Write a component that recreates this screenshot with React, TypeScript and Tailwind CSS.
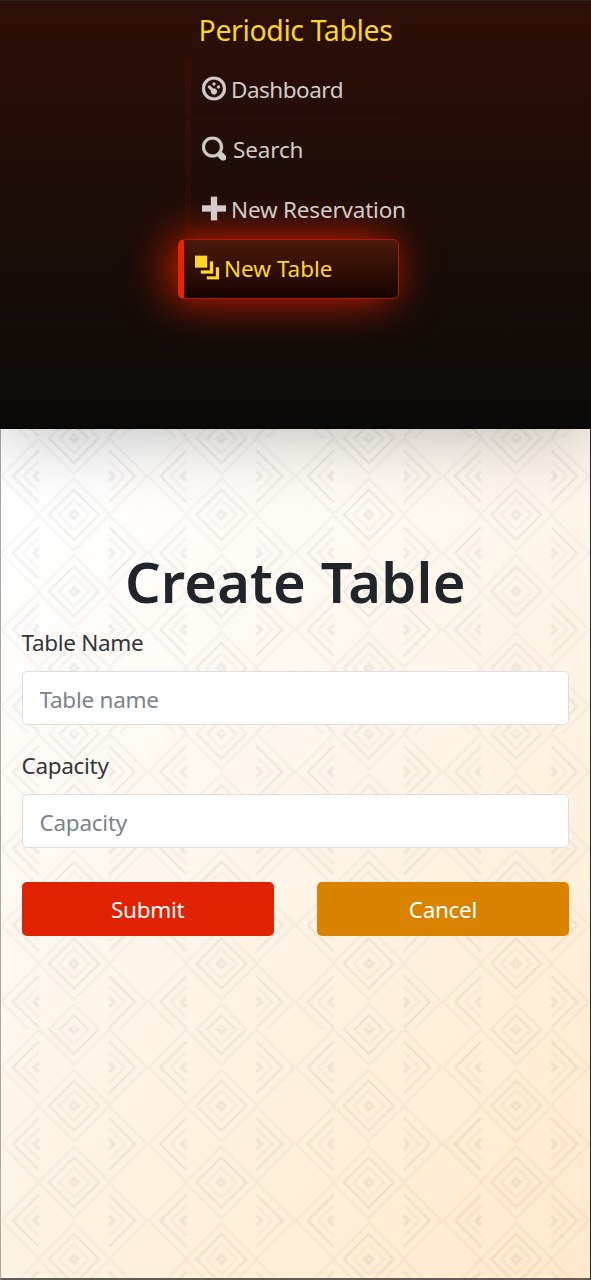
import React from "react";

const ICONS = {
  dashboard:
    "M4 0c-2.2 0-4 1.8-4 4s1.8 4 4 4 4-1.8 4-4-1.8-4-4-4zm0 1c1.66 0 3 1.34 3 3s-1.34 3-3 3-3-1.34-3-3 1.34-3 3-3zm0 1c-.28 0-.5.22-.5.5s.22.5.5.5.5-.22.5-.5-.22-.5-.5-.5zm-1.66 1a.5.5 0 0 0-.19.84l.91.91c-.02.08-.06.16-.06.25 0 .55.45 1 1 1s1-.45 1-1-.45-1-1-1c-.09 0-.17.04-.25.06l-.91-.91a.5.5 0 0 0-.44-.16.5.5 0 0 0-.06 0zm3.16 0c-.28 0-.5.22-.5.5s.22.5.5.5.5-.22.5-.5-.22-.5-.5-.5z",
  search:
    "M3.5 0c-1.93 0-3.5 1.57-3.5 3.5s1.57 3.5 3.5 3.5c.59 0 1.17-.14 1.66-.41a1 1 0 0 0 .13.13l1 1a1.02 1.02 0 1 0 1.44-1.44l-1-1a1 1 0 0 0-.16-.13c.27-.49.44-1.06.44-1.66 0-1.93-1.55-3.5-3.5-3.5zm0 1c1.39 0 2.5 1.11 2.5 2.5 0 .66-.24 1.27-.66 1.72-.01.01-.02.02-.03.03a1 1 0 0 0-.13.13c-.44.4-1.04.63-1.69.63-1.39 0-2.5-1.11-2.5-2.5s1.11-2.5 2.5-2.5z",
  plus: "M3 0v3h-3v2h3v3h2v-3h3v-2h-3v-3h-2z",
  layers: "M0 0v4h4v-4h-4zm5 2v3h-3v1h4v-4h-1zm2 2v3h-3v1h4v-4h-1z",
};

function Icon({ d }: { d: string }) {
  return (
    <svg viewBox="0 0 8 8" className="h-6 w-6 shrink-0 -translate-y-[1.5px] fill-current stroke-current stroke-[0.12]">
      <path d={d} />
    </svg>
  );
}

const ROWS = [0, 76.7, 153.4, 230.1, 306.8];

function diamond(cx: number, cy: number, r: number) {
  return `M${cx - r} ${cy}L${cx} ${cy - r}L${cx + r} ${cy}L${cx} ${cy + r}Z`;
}
function leftChevron(cy: number, r: number) {
  return `M38.5 ${cy - r}L${38.5 - r} ${cy}L38.5 ${cy + r}`;
}
function rightChevron(cy: number, r: number) {
  return `M108.5 ${cy - r}L${108.5 + r} ${cy}L108.5 ${cy + r}`;
}

function motif(rDiamond: number, rChevron: number) {
  return ROWS.map(
    (y) => diamond(73.5, y, rDiamond) + leftChevron(y + 38.3, rChevron) + rightChevron(y + 38.3, rChevron)
  ).join("");
}

function Backdrop() {
  return (
    <svg className="absolute inset-0 h-full w-full" aria-hidden="true">
      <defs>
        <pattern id="weave" x="-0.5" y="9" width="147.4" height="295.5" patternUnits="userSpaceOnUse">
          <g fill="none" stroke="#3c3028">
            <path d={motif(36, 38)} strokeOpacity="0.042" strokeWidth="2.8" />
            <path d={motif(25, 26)} strokeOpacity="0.075" strokeWidth="2.6" />
            <path d={motif(15, 15.5)} strokeOpacity="0.042" strokeWidth="2.8" />
            <path d={motif(4, 5)} strokeOpacity="0.07" strokeWidth="3.4" />
          </g>
        </pattern>
      </defs>
      <rect width="100%" height="100%" fill="url(#weave)" />
    </svg>
  );
}

function NavItem({ icon, label, text }: { icon: string; label: string; text: string }) {
  return (
    <li className="flex h-[60px] w-[221px] items-center rounded-md border-t border-l-[6px] border-[#e02200]/7 pl-[11px] text-[#d2cbc9]">
      <Icon d={icon} />
      <span className={text}>{label}</span>
    </li>
  );
}

function Field({ label, placeholder }: { label: string; placeholder: string }) {
  return (
    <label className="block">
      <span className="block h-[42px] text-[22.5px] leading-[28px] tracking-[-0.3px] text-[#33363a]">{label}</span>
      <input
        placeholder={placeholder}
        className="block h-[54px] w-full rounded-[5px] border border-[#dcdfe2] bg-white px-[17px] pt-[2px] text-[22.5px] tracking-[-0.25px] placeholder:text-[#7b848c] outline-none"
      />
    </label>
  );
}

export default function App() {
  return (
    <div className="relative flex h-[1280px] w-[591px] flex-col overflow-hidden font-['Noto_Sans','Open_Sans',sans-serif]">
      <header className="relative z-10 flex h-[429px] flex-col items-center border-t border-[#29221f] bg-linear-to-b from-[#2d0f07] via-[#1b0d07] to-[#0a0907] shadow-[0_0_75px_rgba(0,0,0,0.3)]">
        <h2 className="mt-[9px] h-[49px] whitespace-nowrap text-[28.5px] leading-[40px] tracking-[-0.4px] text-[#fbd326]">
          Periodic Tables
        </h2>
        <ul className="w-[221px] whitespace-nowrap text-[22.5px]">
          <NavItem icon={ICONS.dashboard} label="Dashboard" text="ml-[5px] tracking-[-0.5px]" />
          <NavItem icon={ICONS.search} label="Search" text="ml-[7px] tracking-[-0.15px]" />
          <NavItem icon={ICONS.plus} label="New Reservation" text="ml-[5px] tracking-[-0.2px]" />
          <li className="-ml-[7px] flex h-[60px] w-[221px] items-center rounded-md border border-l-[6px] border-[#ad1b07] border-l-[#e92300] bg-linear-to-b from-[#4d1a0c] to-[#170501] bg-origin-border pl-[11px] text-[#ffd526] shadow-[-7px_0_45px_rgba(240,34,0,0.92)]">
            <Icon d={ICONS.layers} />
            <span className="ml-[5px] tracking-[0px]">New Table</span>
          </li>
        </ul>
      </header>
      <main className="relative flex-1 border-x border-b-2 border-l-[#aaa7a5] border-r-[#25292c] border-b-[#625c56] bg-linear-[135deg] from-white from-10% via-[#fff5e8] via-50% to-[#ffe9cb]">
        <Backdrop />
        <div className="relative pr-[21px] pl-[20.5px]">
          <h1 className="pt-[112px] text-center text-[56px] font-semibold leading-[80px] tracking-[0.2px] text-[#20252b]">
            Create Table
          </h1>
          <form className="mt-[8px]" onSubmit={(e) => e.preventDefault()}>
            <Field label="Table Name" placeholder="Table name" />
            <div className="h-[27px]" />
            <Field label="Capacity" placeholder="Capacity" />
            <div className="mt-[34px] grid grid-cols-2 gap-[43px] text-[22.5px] tracking-[-0.3px] text-white">
              <button type="submit" className="h-[54px] rounded-[5px] bg-[#e02200] pt-[2px]">
                Submit
              </button>
              <button type="button" className="h-[54px] rounded-[5px] bg-[#d98300] pt-[2px]">
                Cancel
              </button>
            </div>
          </form>
        </div>
      </main>
    </div>
  );
}
